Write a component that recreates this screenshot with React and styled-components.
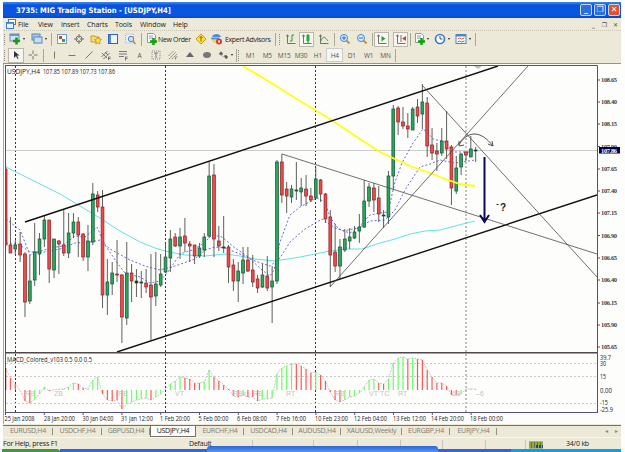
import React from "react";
import styled, { createGlobalStyle } from "styled-components";

const STEP = 4.846;
const START_X = 5.6;

// high, body top, body bottom, low, colour
const candles = `162 169 245 251 r|217 245 253 253 r|240 245 249 255 g|232 244 255 262 r|252 254 302 317 r|255 281 301 304 g|223 252 280 286 g|233 239 254 275 g|216 220 239 247 g|220 220 269 283 r|239 239 270 278 g|240 241 244 274 r|210 245 253 256 r|213 233 253 258 g|213 222 233 238 g|217 222 235 257 r|233 234 257 261 r|225 241 257 271 g|183 194 242 245 g|191 195 207 212 r|190 207 295 308 r|259 282 295 315 g|262 273 284 295 g|240 274 275 282 r|274 275 317 343 r|242 273 318 325 g|264 273 281 302 r|269 281 283 297 k|271 282 283 298 k|269 283 287 293 r|254 285 297 340 r|252 284 296 306 g|254 274 285 287 g|243 257 272 273 g|230 239 258 272 g|233 237 246 247 r|228 237 246 259 g|218 236 243 252 r|241 244 246 262 r|245 245 256 264 r|243 248 256 258 g|233 237 250 257 g|162 176 236 238 g|164 175 239 257 r|226 241 246 251 r|216 247 248 253 k|245 247 267 283 r|259 265 281 291 r|262 271 281 302 g|247 260 273 284 g|247 260 271 272 r|255 270 282 287 r|275 279 288 293 r|264 275 287 288 g|256 276 288 291 r|266 281 287 323 g|160 162 281 284 g|154 162 195 203 r|182 189 196 213 r|185 189 197 203 g|162 190 191 200 k|178 188 192 206 g|175 189 196 206 r|188 196 200 202 r|167 179 198 199 g|179 180 194 202 r|193 194 219 223 r|210 217 255 287 r|224 252 266 272 r|239 247 266 279 g|229 239 250 252 g|228 237 241 249 g|226 232 238 239 g|214 227 231 243 g|180 201 227 228 g|183 187 201 207 g|183 188 200 212 r|186 198 214 222 r|210 215 216 228 k|171 176 217 224 g|105 109 176 190 g|106 108 122 135 r|107 122 126 129 r|113 126 129 138 r|107 109 130 130 g|99 107 116 123 r|84 102 114 129 g|97 103 146 157 r|128 145 153 160 r|143 151 154 171 r|128 141 153 156 g|111 141 149 159 r|145 147 188 205 r|156 168 191 194 g|153 154 167 175 g|152 152 155 161 r|136 149 157 157 g|147 150 151 162 k`
  .split("|")
  .map((row) => {
    const [high, top, bottom, low, color] = row.split(" ");
    return { high: +high, top: +top, bottom: +bottom, low: +low, color };
  });

const macd =
  "22d 12r 6r 0r -11r -13r -9g -4g 3g -1r 0g 1g 1g 3g 7g 6r 2r 1g 10g 13g -4r -10r -11r -10r -19r -14g -12g -10g -9g -8g -10r -7g -4g 1g 6g 9g 13g 12r 11r 7r 7r 8g 20g 13r 9r 5r 1r -6r -7r -5g -7r -7r -11r -9g -9g -8g 16g 22g 24g 26g 26r 24r 21r 17r 18g 15r 9r -2r -10r -12r -10g -7g -6g -3g 3g 10g 11g 7r 6r 11g 27g 32g 33g 31r 32g 31r 30r 20r 13r 7r 7r 4r -5r -5r -4g 1g 1g 1g"
    .split(" ")
    .map((v) => ({ value: parseInt(v, 10), color: v.slice(-1) }));

const barColors = { d: "#900", r: "#ff5656", g: "#6dfb6d" };
const bodyColors = { r: "#ef4a4a", g: "#27a95b", k: "#222" };

const prices = [
  ["108.65", 80], ["108.40", 102], ["108.15", 124], ["107.90", 146.5],
  ["107.65", 169], ["107.40", 191], ["107.15", 213], ["106.90", 235.5],
  ["106.65", 258], ["106.40", 280], ["106.15", 303], ["105.90", 325],
  ["105.65", 347],
];

const macdLabels = [
  ["39.7", 357, 11], ["30", 363.5, 6], ["15", 376.5, 6],
  ["0.00", 390, 12], ["-15", 402.5, 8], ["-25.9", 409, 13],
];

const dates = [
  ["25 Jan 2008", 4.5, 30], ["28 Jan 20:00", 44, 31], ["30 Jan 04:00", 82.5, 31],
  ["31 Jan 12:00", 121, 32], ["1 Feb 20:00", 160, 30], ["5 Feb 00:00", 198.5, 30],
  ["6 Feb 08:00", 237, 30], ["7 Feb 16:00", 276, 30], ["10 Feb 23:00", 315, 33],
  ["12 Feb 04:00", 354, 33], ["13 Feb 12:00", 393, 33], ["14 Feb 20:00", 431, 33],
  ["18 Feb 00:00", 470, 33],
];

const signals = [
  ["RB", 25], ["ZB", 54], ["RB", 118], ["VT", 175], ["RBx", 233],
  ["RB", 253], ["RT", 286], ["RB", 335], ["VT", 369], ["TC", 380],
  ["RT", 398], ["6B", 452], ["–6", 476],
];

const menus = [
  ["File", 20], ["View", 23], ["Insert", 26], ["Charts", 28],
  ["Tools", 25], ["Window", 33], ["Help", 20],
];

const timeframes = ["M1", "M5", "M15", "M30", "H1", "H4", "D1", "W1", "MN"];

const tabs = [
  ["EURUSD,H4", 50], ["USDCHF,H4", 49], ["GBPUSD,H4", 48], ["USDJPY,H4", 46],
  ["EURCHF,H4", 48], ["USDCAD,H4", 49], ["AUDUSD,H4", 48],
  ["XAUUSD,Weekly", 61], ["EURGBP,H4", 48], ["EURJPY,H4", 47],
];

function Glyph({ name }) {
  const glyphs = {
    newChart: (
      <>
        <rect x="1" y="1" width="9" height="7" fill="#d5e5f8" stroke="#6b8fb8" />
        <path d="M1 2h9" stroke="#4f83c4" strokeWidth="1.5" />
        <path d="M7.5 4.5v7M4 8h7" stroke="#12a012" strokeWidth="2.6" />
      </>
    ),
    profiles: (
      <>
        <rect x="1" y="1" width="8" height="6" fill="#a5c8ed" stroke="#5c88bd" />
        <rect x="3" y="4" width="8" height="6" fill="#c8dcf4" stroke="#5c88bd" />
        <path d="M3 10.5h8" stroke="#d6a93a" />
      </>
    ),
    market: (
      <>
        <rect x="1.5" y="1.5" width="9" height="9" fill="#fff" stroke="#6da0d0" />
        <rect x="3" y="3" width="3" height="3" fill="#dc4123" />
        <rect x="6" y="6" width="3" height="3" fill="#29a645" />
      </>
    ),
    target: (
      <g fill="none" stroke="#707070">
        <circle cx="6" cy="6" r="3" />
        <path d="M6 1v4M6 7v4M1 6h4M7 6h4" />
      </g>
    ),
    navigator: (
      <>
        <path d="M1 3h4l1 1h3v5H1z" fill="#f7dc75" stroke="#c69922" />
        <path d="m8 4 1 2 2.5.5-1.8 1.8.4 2.7L8 9.8 5.8 11l.4-2.7L4.5 6.5 7 6z" fill="#ffe246" stroke="#b48614" strokeWidth=".7" />
      </>
    ),
    terminal: (
      <>
        <rect x="1.5" y="1.5" width="9" height="9" fill="#eef6ff" stroke="#2866c2" />
        <path d="M3 1v9" stroke="#2866c2" strokeWidth="1.5" />
      </>
    ),
    tester: (
      <>
        <rect x="1.5" y="1" width="8" height="9" fill="#e8eff8" stroke="#9eb4ce" strokeDasharray="1 1" />
        <circle cx="7" cy="6" r="2.7" fill="#c7e1fa" stroke="#5685bd" />
        <path d="m9 8 2.5 3" stroke="#bd8b39" strokeWidth="1.5" />
      </>
    ),
    order: (
      <>
        <path d="M1.5.5h6l2 2v7h-8z" fill="#fff" stroke="#8d9aa8" />
        <path d="M3 3h4M3 5h4" stroke="#8d9aa8" />
        <path d="M7.5 5v7M4 8.5h7" stroke="#12a012" strokeWidth="2.5" />
      </>
    ),
    editor: (
      <>
        <path d="m6 1 5 5-5 5-5-5z" fill="#ffe147" stroke="#cf9c00" />
        <path d="M6 3.5v5M4.5 5 6 3.5 7.5 5" stroke="#8b6400" fill="none" />
      </>
    ),
    expert: (
      <>
        <circle cx="5" cy="6" r="4" fill="#f1ce61" />
        <path d="M1 4c1-4 8-4 9 0z" fill="#4c8dd2" />
        <path d="M0 5.500h8" stroke="#4c8dd2" strokeWidth="1.500" />
        <circle cx="8" cy="8.500" r="3" fill="#df3928" />
        <path d="M7 7.500h2v2H7z" fill="#fff" />
      </>
    ),
    bars: (
      <>
        <path d="M2.500 1.500v9h8M1 3h3" stroke="#70746d" fill="none" />
        <path d="M7 2v6M7 2h2M5 8h2" stroke="#249b37" fill="none" />
      </>
    ),
    candles: (
      <>
        <path d="M2.500 1.500v9h8M1 3h3" stroke="#70746d" fill="none" />
        <path d="M7 1v9" stroke="#187c28" />
        <rect x="5.500" y="2" width="3" height="6" fill="#25ac3b" />
      </>
    ),
    line: (
      <>
        <path d="M2.500 1.500v9h8M1 3h3" stroke="#70746d" fill="none" />
        <path d="M3 8c2-6 4-4 7 0" stroke="#33a946" fill="none" />
      </>
    ),
    zoomIn: (
      <>
        <path d="m7.500 7.500 3 3" stroke="#c59328" strokeWidth="2" />
        <circle cx="5" cy="5" r="3.500" fill="#e0f0ff" stroke="#4481cf" />
        <path d="M3 5h4M5 3v4" stroke="#2369c6" />
      </>
    ),
    zoomOut: (
      <>
        <path d="m7.500 7.500 3 3" stroke="#c59328" strokeWidth="2" />
        <circle cx="5" cy="5" r="3.500" fill="#e0f0ff" stroke="#4481cf" />
        <path d="M3 5h4" stroke="#2369c6" />
      </>
    ),
    scroll: (
      <>
        <path d="M2.500 1.500v9h8M1 3h3" stroke="#70746d" fill="none" />
        <path d="m5.500 3 4 2.500-4 3z" fill="#22a33a" />
      </>
    ),
    shift: (
      <>
        <path d="M2.500 1.500v9h8M1 3h3M6 2v7" stroke="#70746d" fill="none" />
        <path d="m11 3-4 2.500 4 2.500z" fill="#c4443c" />
      </>
    ),
    clock: (
      <>
        <circle cx="6" cy="6" r="4.500" fill="#fff" stroke="#397bd3" strokeWidth="1.700" />
        <path d="M6 3v3h2.500" stroke="#555" fill="none" />
      </>
    ),
    template: (
      <>
        <rect x="1" y="1.500" width="10" height="9" fill="#fff" stroke="#4d87c1" />
        <path d="M1 2.500h10" stroke="#4d87c1" strokeWidth="2" />
        <path d="m2.500 6 2-1 2 1 3-1" stroke="#c55" fill="none" />
        <path d="m2.500 9 2-1 2 1 3-1" stroke="#3b9b45" fill="none" />
      </>
    ),
    cursor: <path d="M4 2v7l2-2 1.500 3 1-.5L7 6.500h2.500z" fill="#333" />,
    cross: <path d="M6 1.500v3.500M6 7v3.500M1.500 6H5M7 6h3.500" stroke="#777" />,
    vertical: <path d="M5.500 2.500v7" stroke="#777" />,
    horizontal: <path d="M2.500 6.500h7" stroke="#777" />,
    trend: <path d="m2.500 9.500 7-7" stroke="#777" />,
    channel: <path d="m1.500 8 6-6M3.500 10l6-6M2 4l5 5M5 3l3 3M8.500 8v3M8.500 8h2M8.500 9.500h2" stroke="#777" fill="none" />,
    fibo: <path d="M2 2.500h8M2 5h8M2 7.500h5M8.500 8v3.500M8.500 8h2M8.500 9.500h2" stroke="#777" />,
    label: (
      <>
        <rect x="2" y="2" width="8" height="8" fill="none" stroke="#888" strokeDasharray="1 1" />
        <path d="M4 4h4M6 4v5" stroke="#777" />
      </>
    ),
    fan: <path d="m1.500 7 5-5M2 10l7-7M5 10l5-5M8.500 8v3M8.500 8h2" stroke="#888" strokeDasharray="2 .5" fill="none" />,
    triangle: <path d="m6 3 4 5H2z" fill="#666" />,
    ellipse: <ellipse cx="6" cy="6" rx="4" ry="3" fill="#777" />,
    arrows: <path d="m2 5 2-2.500 2 2.500-2 1zM7 7l2-1 2 2-2 2zM4 6l3 2" fill="#555" stroke="#777" strokeWidth=".5" />,
    window: (
      <>
        <rect x="3.500" y="1.500" width="7" height="5" fill="#fff" stroke="#3e7cc4" />
        <rect x="1.500" y="4.500" width="7" height="6" fill="#e2f2ff" stroke="#3e7cc4" />
        <path d="M1.500 5h7" stroke="#3e7cc4" strokeWidth="1.500" />
      </>
    ),
  };
  return <Icon viewBox="0 0 12 12">{glyphs[name]}</Icon>;
}

function Label({ children, ...rest }) {
  return (
    <ChartText lengthAdjust="spacingAndGlyphs" {...rest}>
      {children}
    </ChartText>
  );
}

function PriceChart() {
  const cx = (i) => START_X + i * STEP;
  const outline = macd.map((m, i) => `${cx(i)},${390 - m.value}`).join(" ");
  return (
    <ChartSvg viewBox="3 63 618 361">
      <defs>
        <clipPath id="plot">
          <rect x="6" y="66" width="591" height="286" />
        </clipPath>
      </defs>
      <rect x="3" y="63" width="618" height="361" fill="#fdfdfb" />
      <path d="M3 63.500h618" stroke="#9c8f86" />
      <path d="M3.500 64v360" stroke="#aaa69c" />
      <path d="M5 65.500h592.500V412.500" fill="none" stroke="#555" />
      <path d="M5.500 65v348" stroke="#555" />

      <g stroke="#333" strokeDasharray="2 2">
        <path d="M15.500 66v346M165.500 66v346M315.500 66v346" />
        <path d="M466 66v346" stroke="#aaa" strokeWidth="1.500" />
      </g>
      <path d="M6 150.500h591" stroke="#ccc" />
      <path d="m474 66 4 3 4-3z" fill="#bbb" />

      <g clipPath="url(#plot)" fill="none">
        <polyline stroke="#62e3e3" points="6,167 30,179 60,194 80,206 100,218 120,231 140,242 155,248 165,251 185,255 205,256 225,254 240,256 255,259 275,261 300,257 315,254 330,251 345,249 362,249 380,243 395,239 410,234 425,231 440,230 455,226 475,221" />
        <g stroke="#5a5ad8" strokeWidth=".9" strokeDasharray="2 2">
          <polyline points="6,219 20,230 30,255 38,252 50,248 62,246 75,236 85,237 97,227 105,245 118,264 125,273 140,277 150,283 160,281 168,272 180,254 195,249 205,242 212,235 222,237 235,248 247,256 262,270 270,276 274,270 280,242 290,215 300,207 317,198 325,202 330,217 337,227 343,231 358,228 370,215 380,213 388,212 395,182 402,163 413,143 423,129 428,133 433,139 445,142 453,152 475,152" />
          <polyline points="6,243 20,245 30,252 45,252 60,249 75,243 90,242 100,240 110,249 130,260 145,266 160,270 175,266 195,259 205,250 215,247 225,248 240,254 255,261 270,266 280,258 290,242 305,229 322,219 335,228 350,233 370,221 385,220 395,210 405,190 420,167 430,164 440,160 455,163 475,160" />
        </g>
        {candles.map((c, i) => (
          <g key={i}>
            <path d={`M${cx(i)} ${c.high}V${c.low}`} stroke="#4e4e48" strokeWidth=".9" />
            <rect
              x={cx(i) - 1.4}
              y={c.top}
              width="2.8"
              height={Math.max(c.bottom - c.top, 0.8)}
              fill={bodyColors[c.color]}
              stroke={c.color === "r" ? "#8a1f24" : "#164d35"}
              strokeWidth=".7"
            />
          </g>
        ))}
        <polyline stroke="#ffff14" strokeWidth="1.8" points="243,66 273,84 300,101 330,119 360,139 380,152 395,159 410,166 430,173 445,179 460,184 475,186" />
        <path d="M25 222 498 66M117 352l480-157" stroke="#111" strokeWidth="1.4" />
        <path d="m282 154 315 100M422 85l175 192M330 287 528 66" stroke="#4b4b4b" strokeWidth=".8" />
        <path d="M459 145c5-9 11-11 16-11s12 4 18 12M459 141v5l5-1M488 144l5 2-1-5" stroke="#555" />
        <path d="M484.500 157v64M480 215l4.500 7 4.500-7" stroke="#0a0a55" strokeWidth="2" />
      </g>
      <QuestionMark x="500" y="211">?</QuestionMark>
      <path d="M496.500 204.500h2" stroke="#222" />
      <Label x="7" y="74" textLength="33">USDJPY,H4</Label>
      <Label x="43" y="74" textLength="72">107.85 107.89 107.73 107.86</Label>

      <path d="M5 352.700h592" stroke="#504848" strokeWidth="1.600" />
      <path d="M6 363.500h591M6 376.500h591M6 403.500h591" stroke="#ccc" strokeDasharray="2 2" />
      <polyline points={outline} fill="none" stroke="#c8c8c8" strokeDasharray="2 1" />
      {macd.map((m, i) => (
        <path key={i} d={`M${cx(i)} 390v${-m.value}`} stroke={barColors[m.color]} strokeWidth="1.2" />
      ))}
      {signals.map(([text, x]) => (
        <Signal key={x} x={x} y="396">{text}</Signal>
      ))}
      <Label x="7" y="362" textLength="85">MACD_Colored_v103 0.5 0.0 0.5</Label>
      <path d="M5 412.500h593" stroke="#53537c" />

      {prices.map(([text, y]) => (
        <g key={text}>
          <path d={`M597 ${y}h3`} stroke="#555" />
          <PriceText x="601" y={y + 2.4} textLength="16">{text}</PriceText>
        </g>
      ))}
      <rect x="599" y="147" width="21" height="6.5" fill="#000050" />
      <PriceText x="601" y="152.500" textLength="16" $light>107.86</PriceText>
      {macdLabels.map(([text, y, w]) => (
        <Label key={text} x="600" y={y + 2.5} textLength={w}>{text}</Label>
      ))}
      {dates.map(([text, x, w], i) => (
        <g key={text}>
          <path d={`M${5.5 + i * 38.8} 413v2`} stroke="#555" />
          <Label x={x} y="421" textLength={w}>{text}</Label>
        </g>
      ))}
    </ChartSvg>
  );
}

export default function App() {
  return (
    <>
      <GlobalStyle />
      <Station>
        <TitleBar>
          <Title>3735: MIG Trading Station - [USDJPY,H4]</Title>
          <Caption>_</Caption>
          <Caption>❐</Caption>
          <Caption $close>✕</Caption>
        </TitleBar>

        <MenuBar>
          <Tool $w={15}><Glyph name="window" /></Tool>
          {menus.map(([text, w]) => (
            <MenuItem key={text} $w={w}>{text}</MenuItem>
          ))}
          <Spacer />
          <ChildCaption>_</ChildCaption>
          <ChildCaption>❐</ChildCaption>
          <ChildCaption>✕</ChildCaption>
        </MenuBar>

        <ToolBar>
          <Grip />
          <Tool $w={14}><Glyph name="newChart" /></Tool>
          <Drop $w={8} />
          <Tool $w={14}><Glyph name="profiles" /></Tool>
          <Drop $w={6} />
          <Divider $w={3} />
          <Tool $w={17}><Glyph name="market" /></Tool>
          <Tool $w={17}><Glyph name="target" /></Tool>
          <Tool $w={17}><Glyph name="navigator" /></Tool>
          <Tool $w={17}><Glyph name="terminal" /></Tool>
          <Tool $w={17}><Glyph name="tester" /></Tool>
          <Divider $w={7} />
          <Tool $w={13}><Glyph name="order" /></Tool>
          <ToolText $w={34}>New Order</ToolText>
          <Tool $w={17}><Glyph name="editor" /></Tool>
          <Tool $w={16}><Glyph name="expert" /></Tool>
          <ToolText $w={47}>Expert Advisors</ToolText>
          <Divider $w={6} />
          <Grip />
          <Tool $w={16}><Glyph name="bars" /></Tool>
          <Tool $w={15} $pressed><Glyph name="candles" /></Tool>
          <Tool $w={19}><Glyph name="line" /></Tool>
          <Divider $w={3} />
          <Tool $w={17}><Glyph name="zoomIn" /></Tool>
          <Tool $w={17}><Glyph name="zoomOut" /></Tool>
          <Divider $w={4} />
          <Tool $w={15} $pressed><Glyph name="scroll" /></Tool>
          <Spread $w={4} />
          <Tool $w={15} $pressed><Glyph name="shift" /></Tool>
          <Divider $w={5} />
          <Tool $w={13}><Glyph name="order" /></Tool>
          <Drop $w={7} />
          <Tool $w={14}><Glyph name="clock" /></Tool>
          <Drop $w={7} />
          <Tool $w={14}><Glyph name="template" /></Tool>
          <Drop $w={5} />
          <Divider $w={5} />
        </ToolBar>

        <ToolBar>
          <Grip />
          <Tool $w={16} $pressed><Glyph name="cursor" /></Tool>
          <Tool $w={17}><Glyph name="cross" /></Tool>
          <Divider $w={5} />
          <Tool $w={17}><Glyph name="vertical" /></Tool>
          <Tool $w={17}><Glyph name="horizontal" /></Tool>
          <Tool $w={17}><Glyph name="trend" /></Tool>
          <Tool $w={17}><Glyph name="channel" /></Tool>
          <Tool $w={17}><Glyph name="fibo" /></Tool>
          <Timeframe>A</Timeframe>
          <Tool $w={17}><Glyph name="label" /></Tool>
          <Tool $w={17}><Glyph name="fan" /></Tool>
          <Tool $w={17}><Glyph name="triangle" /></Tool>
          <Tool $w={17}><Glyph name="ellipse" /></Tool>
          <Tool $w={14}><Glyph name="arrows" /></Tool>
          <Drop $w={6} />
          <Divider $w={1} />
          <Grip />
          {timeframes.map((tf) => (
            <Timeframe key={tf} $pressed={tf === "H4"}>{tf}</Timeframe>
          ))}
          <Divider $w={3} />
        </ToolBar>

        <PriceChart />

        <TabBar>
          {tabs.map(([text, w]) => (
            <Tab key={text} $w={w} $active={text === "USDJPY,H4"}>{text}</Tab>
          ))}
          <Spacer />
          <TabArrow>◂</TabArrow>
          <TabArrow>▸</TabArrow>
        </TabBar>

        <StatusBar>
          <StatusCell $w={186}>For Help, press F1</StatusCell>
          <StatusCell $w={63}>Default</StatusCell>
          <StatusCell $w={61} $line />
          <StatusCell $w={44} $line />
          <StatusCell $w={43} $line />
          <StatusCell $w={42} $line />
          <StatusCell $w={43} $line />
          <StatusCell $w={40} $line />
          <StatusCell $w={41} $line>
            <Traffic viewBox="0 0 14 7">
              <rect width="14" height="7" fill="#587a36" />
              <path d="M1 0v7M4 0v7M7 0v7M10 0v7M13 0v7" stroke="#d3d35a" />
              <path d="M7 5h7" stroke="#244a86" strokeWidth="3" strokeDasharray="2 1" />
            </Traffic>
          </StatusCell>
          <StatusCell $w={40}>34/0 kb</StatusCell>
        </StatusBar>
      </Station>
      <TaskBar>
        <StartButton />
        <TaskFill />
        <TaskTray />
        <TaskTip />
      </TaskBar>
    </>
  );
}

const GlobalStyle = createGlobalStyle`
  body {
    margin: 0;
    background: #fdfdfb;
    overflow: hidden;
    font-family: "Open Sans", "Liberation Sans", sans-serif;
    font-size: 7px;
    color: #222;
  }
`;

const Station = styled.div`
  display: flex;
  flex-direction: column;
  width: 618px;
  height: 447px;
  margin: 2px 0 0 3px;
  background: #ece9d8;
`;

const TitleBar = styled.div`
  display: flex;
  align-items: center;
  height: 16px;
  flex: none;
  gap: 2px;
  box-sizing: border-box;
  padding: 0 1px 0 13px;
  background: linear-gradient(#3d8cf5, #0a52dc 20%, #0757e2 80%, #0a48c0);
`;

const Title = styled.div`
  flex-grow: 1;
  color: #fff;
  font-family: "DejaVu Sans Condensed", "Liberation Sans", sans-serif;
  font-weight: bold;
  font-size: 7.6px;
  white-space: nowrap;
`;

const Caption = styled.div`
  display: flex;
  align-items: center;
  justify-content: center;
  width: 12px;
  height: 12px;
  box-sizing: border-box;
  border: 1px solid #c6dafa;
  border-radius: 2px;
  color: #fff;
  font: bold 8px "DejaVu Sans", sans-serif;
  line-height: 8px;
  background: ${(props) => (props.$close ? "#e2512b" : "#2f6ce4")};
`;

const MenuBar = styled.div`
  display: flex;
  align-items: center;
  height: 13px;
  flex: none;
  border-bottom: 1px dotted #c9c5b5;
  box-sizing: border-box;
`;

const MenuItem = styled.div`
  width: ${(props) => props.$w}px;
  white-space: nowrap;
  letter-spacing: -0.1px;
`;

const ChildCaption = styled.div`
  width: 11px;
  text-align: center;
  font: bold 6px "DejaVu Sans", sans-serif;
  color: #555;
`;

const Spacer = styled.div`
  flex-grow: 1;
`;

const Spread = styled.div`
  width: ${(props) => props.$w}px;
`;

const ToolBar = styled.div`
  display: flex;
  align-items: center;
  height: 16px;
  flex: none;
`;

const Grip = styled.div`
  width: 2px;
  height: 11px;
  margin: 0 2px 0 1px;
  border-left: 1px dotted #8f8b7c;
  box-sizing: border-box;
`;

const Tool = styled.div`
  display: flex;
  align-items: center;
  justify-content: center;
  flex: none;
  box-sizing: border-box;
  width: ${(props) => props.$w}px;
  height: ${(props) => (props.$pressed ? "15px" : "13px")};
  background: ${(props) => (props.$pressed ? "#f7f6f0" : "none")};
  border: ${(props) => (props.$pressed ? "1px solid #bbb8aa" : "none")};
`;

const Icon = styled.svg`
  width: 12px;
  height: 12px;
  flex: none;
`;

const ToolText = styled.div`
  width: ${(props) => props.$w}px;
  white-space: nowrap;
  letter-spacing: -0.35px;
`;

const Drop = styled.div`
  width: ${(props) => props.$w}px;
  flex: none;
  &::after {
    content: "";
    display: block;
    width: 0;
    border: 1.5px solid transparent;
    border-top: 2px solid #222;
    border-bottom: none;
    margin-left: 1px;
  }
`;

const Divider = styled.div`
  width: ${(props) => props.$w}px;
  height: 13px;
  flex: none;
  background: linear-gradient(#aaa79a, #aaa79a) center / 1px 100% no-repeat;
`;

const Timeframe = styled.div`
  display: flex;
  align-items: center;
  justify-content: center;
  width: 16.9px;
  height: 14px;
  box-sizing: border-box;
  font-size: 6.5px;
  letter-spacing: -0.2px;
  color: #555;
  background: ${(props) => (props.$pressed ? "#f7f6f0" : "none")};
  border: ${(props) => (props.$pressed ? "1px solid #ccc" : "none")};
`;

const ChartSvg = styled.svg`
  display: block;
  width: 618px;
  height: 361px;
  flex: none;
`;

const ChartText = styled.text`
  font-size: 6.2px;
  fill: #222;
`;

const PriceText = styled.text`
  font-family: "Liberation Serif", serif;
  font-weight: bold;
  font-size: 6.5px;
  fill: ${(props) => (props.$light ? "#fff" : "#444")};
`;

const Signal = styled.text`
  font-family: "Liberation Sans", sans-serif;
  font-size: 7px;
  fill: #c4c4c4;
`;

const QuestionMark = styled.text`
  font-family: "Liberation Sans", sans-serif;
  font-size: 10px;
  font-weight: bold;
  fill: #222;
`;

const TabBar = styled.div`
  display: flex;
  height: 12px;
  flex: none;
  border-top: 1px solid #777268;
  box-sizing: border-box;
  margin-top: 1px;
`;

const Tab = styled.div`
  width: ${(props) => props.$w}px;
  height: 11px;
  line-height: 9px;
  letter-spacing: -0.25px;
  box-sizing: border-box;
  text-align: center;
  white-space: nowrap;
  color: ${(props) => (props.$active ? "#111" : "#807c70")};
  background-color: ${(props) => (props.$active ? "#fdfdfb" : "transparent")};
  border: solid #777268;
  border-width: ${(props) => (props.$active ? "0 1px 1px 1px" : "0")};
  background-image: ${(props) =>
    props.$active ? "none" : "linear-gradient(#96917f, #96917f)"};
  background-size: 1px 7px;
  background-position: right 2px;
  background-repeat: no-repeat;
`;

const TabArrow = styled.div`
  width: 10px;
  line-height: 10px;
  text-align: center;
  color: #888;
  font-size: 6px;
`;

const StatusBar = styled.div`
  display: flex;
  align-items: center;
  height: 12px;
  flex: none;
  border-top: 1px solid #f8f6ee;
`;

const StatusCell = styled.div`
  width: ${(props) => props.$w}px;
  height: 9px;
  line-height: 8px;
  letter-spacing: -0.2px;
  flex: none;
  box-sizing: border-box;
  border-left: ${(props) => (props.$line ? "1px solid #c9c5b4" : "none")};
  white-space: nowrap;
`;

const Traffic = styled.svg`
  display: block;
  width: 14px;
  height: 8px;
  margin: 1px 0 0 3px;
`;

const TaskBar = styled.div`
  position: relative;
  display: flex;
  height: 3px;
  margin-left: 2px;
  width: 619px;
`;

const StartButton = styled.div`
  width: 58px;
  background: #3c9a3c;
  border-radius: 0 4px 0 0;
`;

const TaskFill = styled.div`
  flex-grow: 1;
  background: #2a68dc;
`;

const TaskTray = styled.div`
  width: 110px;
  background: #129be9;
`;

const TaskTip = styled.div`
  position: absolute;
  left: 205px;
  top: -3px;
  width: 231px;
  height: 6px;
  border-radius: 3px 3px 0 0;
  background: linear-gradient(#2f66cf, #5793f0);
`;
